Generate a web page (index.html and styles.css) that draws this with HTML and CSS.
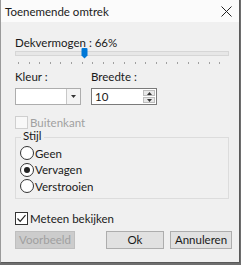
FILE: index.html
```html
<!DOCTYPE html>
<html lang="nl">
<head>
  <meta charset="UTF-8">
  <title>Toenemende omtrek</title>
  <link rel="stylesheet" href="styles.css">
</head>
<body>

<div class="dialog">
  <div class="titlebar">
    <span class="title">Toenemende omtrek</span>
    <svg class="close" width="11" height="11" viewBox="0 0 11 11">
      <path d="M0.5 0.5 L10.5 10.5 M10.5 0.5 L0.5 10.5" stroke="#222" stroke-width="1" fill="none"/>
    </svg>
  </div>

  <div class="content">
    <div class="label">Dekvermogen : 66%</div>
    <div class="slider">
      <div class="track"></div>
      <svg class="thumb" width="7" height="11" viewBox="0 0 7 11">
        <path d="M0.5 1 Q0.5 0 1.5 0 L5.5 0 Q6.5 0 6.5 1 L6.5 7.5 L3.5 10.5 L0.5 7.5 Z" fill="#0078d7"/>
      </svg>
      <div class="ticks"></div>
    </div>

    <div class="row">
      <div class="field">
        <div class="label">Kleur :</div>
        <div class="combo">
          <div class="swatch"></div>
          <div class="drop">
            <svg width="5" height="3" viewBox="0 0 5 3"><path d="M0 0 L5 0 L2.5 3 Z" fill="#333"/></svg>
          </div>
        </div>
      </div>
      <div class="field">
        <div class="label">Breedte :</div>
        <div class="spin">
          <span class="value">10</span>
          <div class="arrows">
            <div class="arrow"><svg width="5" height="3" viewBox="0 0 5 3"><path d="M0 3 L5 3 L2.5 0 Z" fill="#333"/></svg></div>
            <div class="arrow"><svg width="5" height="3" viewBox="0 0 5 3"><path d="M0 0 L5 0 L2.5 3 Z" fill="#333"/></svg></div>
          </div>
        </div>
      </div>
    </div>

    <div class="check disabled"><span class="box"></span>Buitenkant</div>

    <div class="group">
      <div class="legend">Stijl</div>
      <div class="radio"><span class="dot"></span>Geen</div>
      <div class="radio"><span class="dot on"></span>Vervagen</div>
      <div class="radio"><span class="dot"></span>Verstrooien</div>
    </div>

    <div class="check live">
      <span class="box">
        <svg width="11" height="11" viewBox="0 0 11 11"><path d="M1.5 5.5 L4.2 8.3 L9.5 2.2" stroke="#222" stroke-width="1.2" fill="none"/></svg>
      </span>Meteen bekijken
    </div>

    <div class="buttons">
      <div class="btn off">Voorbeeld</div>
      <div class="spacer"></div>
      <div class="btn ok">Ok</div>
      <div class="btn cancel">Annuleren</div>
    </div>
  </div>
</div>

</body>
</html>
```

FILE: styles.css
```css
body {
  margin: 0;
  background: #6e6e6e;
  font-family: "Lato", "Noto Sans", sans-serif;
  font-size: 11.5px;
  color: #1a1a1a;
}
.dialog {
  width: 238px;
  height: 262px;
  background: #f0f0f0;
  border-left: 1px solid #9a9a9a;
  border-right: 1px solid #5a5a5a;
  border-bottom: 1px solid #5a5a5a;
  display: flex;
  flex-direction: column;
}
.titlebar {
  height: 22px;
  background: #fbfbfb;
  display: flex;
  align-items: center;
  padding: 0 7px 0 4px;
}
.title {
  flex: 1;
  line-height: 15px;
}
.content {
  padding: 13px 10px 0 14px;
  display: flex;
  flex-direction: column;
}
.label {
  line-height: 15px;
}
.slider {
  position: relative;
  height: 16px;
  margin-top: -2px;
}
.track {
  margin-top: 3px;
  height: 3px;
  border: 1px solid #d6d6d6;
  background: #e7e7e7;
}
.thumb {
  position: absolute;
  left: 66px;
  top: 0;
}
.ticks {
  margin: 6px 3px 0 3px;
  height: 2px;
  background: repeating-linear-gradient(to right, #a0a0a0 0, #a0a0a0 1px, transparent 1px, transparent 10.6px);
}
.row {
  display: flex;
  gap: 10px;
  margin-top: 5px;
}
.field .label {
  margin-bottom: 4px;
}
.combo {
  width: 64px;
  height: 15px;
  border: 1px solid #adadad;
  background: #fff;
  display: flex;
}
.swatch {
  flex: 1;
}
.drop {
  width: 13px;
  border-left: 1px solid #c8c8c8;
  background: #f4f4f4;
  display: flex;
  align-items: center;
  justify-content: center;
}
.spin {
  width: 64px;
  height: 15px;
  border: 1px solid #7a7a7a;
  background: #fff;
  display: flex;
}
.value {
  flex: 1;
  padding-left: 3px;
  line-height: 15px;
}
.arrows {
  width: 12px;
  display: flex;
  flex-direction: column;
  padding: 1px 1px 1px 0;
  gap: 1px;
}
.arrow {
  flex: 1;
  background: #e8e8e8;
  border: 1px solid #bdbdbd;
  display: flex;
  align-items: center;
  justify-content: center;
}
.check {
  display: flex;
  align-items: center;
  line-height: 15px;
}
.box {
  width: 11px;
  height: 11px;
  border: 1px solid #333;
  background: #fff;
  margin-right: 2px;
  display: flex;
}
.check.disabled {
  color: #a0a0a0;
  margin-top: 10px;
}
.check.disabled .box {
  border-color: #cfcfcf;
  background: #f8f8f8;
}
.group {
  position: relative;
  margin-top: 7px;
  border: 1px solid #dcdcdc;
  padding: 7px 5px 3px 4px;
}
.legend {
  position: absolute;
  top: -9px;
  left: 5px;
  padding: 0 2px;
  background: #f0f0f0;
  line-height: 13px;
}
.radio {
  display: flex;
  align-items: center;
  line-height: 15px;
  height: 16.5px;
}
.dot {
  width: 12px;
  height: 12px;
  border: 1px solid #333;
  border-radius: 50%;
  background: #fff;
  margin-right: 1px;
  display: flex;
  align-items: center;
  justify-content: center;
}
.dot.on::after {
  content: "";
  width: 6px;
  height: 6px;
  border-radius: 50%;
  background: #222;
}
.check.live {
  margin-top: 12px;
}
.buttons {
  display: flex;
  margin-top: 5px;
  margin-right: -3px;
  gap: 6px;
}
.spacer {
  flex: 1;
}
.btn {
  height: 16px;
  border: 1px solid #adadad;
  background: #e1e1e1;
  text-align: center;
  line-height: 16px;
}
.btn.off {
  width: 58px;
  color: #a0a0a0;
  background: #cccccc;
  border-color: #bfbfbf;
}
.btn.ok {
  width: 56px;
}
.btn.cancel {
  width: 60px;
}
```
